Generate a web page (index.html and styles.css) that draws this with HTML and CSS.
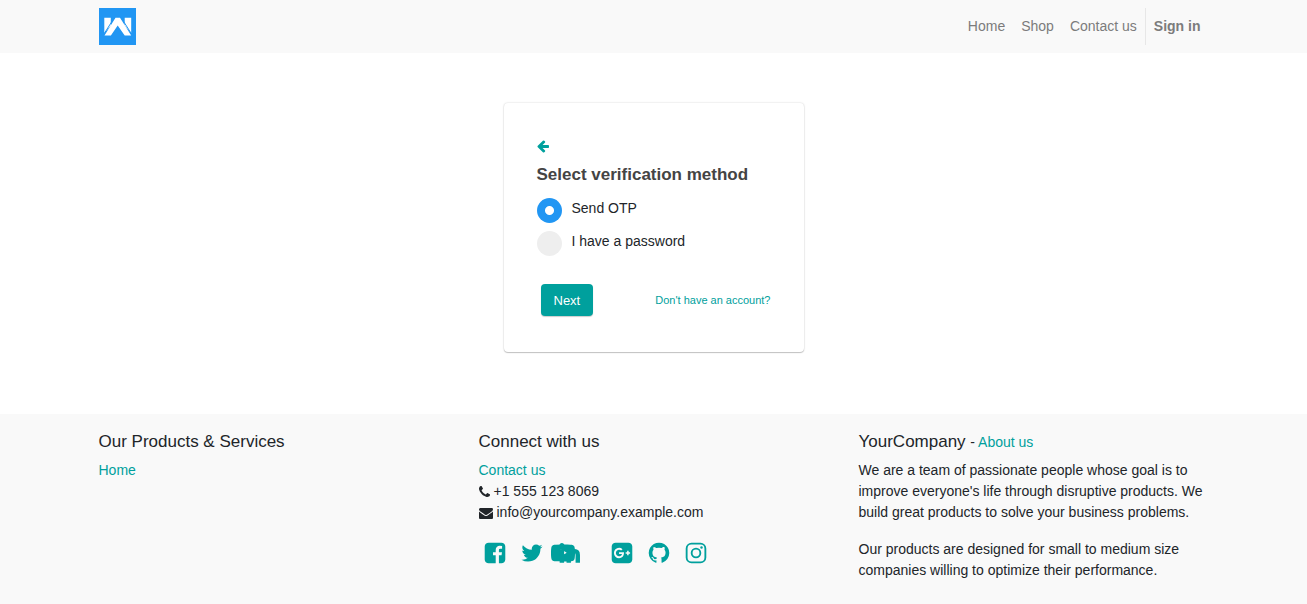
FILE: index.html
```
<!DOCTYPE html>
<html lang="en">
<head>
<meta charset="utf-8">
<meta name="viewport" content="width=device-width, initial-scale=1">
<title>Sign in</title>
<link rel="stylesheet" href="styles.css">
</head>
<body>
<header class="header">
  <div class="container navbar">
    <a class="logo" href="#" aria-label="Home page">
      <svg viewBox="0 0 37 37"><rect width="37" height="37" fill="#2196f3"/><g fill="#fff"><path d="M5.300 9.700h6.500v7.800L5.300 25z"/><path d="M32.200 9.700h-6.500v7.800l6.500 7.500z"/><path d="M5.500 27.500L16.500 9.700h4.500L32.200 27.500h-6.500L18.700 17.500l-6.800 10z"/></g><path d="M4.800 26.200L15.300 9.700M32.700 26.200L22.200 9.700" stroke="#2196f3" stroke-width="1"/></svg>
    </a>
    <nav class="menu">
      <a href="#">Home</a>
      <a href="#">Shop</a>
      <a href="#">Contact us</a>
      <a class="sign-in" href="#">Sign in</a>
    </nav>
  </div>
</header>

<main class="main">
  <form class="card">
    <a class="back" href="#" aria-label="Back">
      <svg class="icon-small" viewBox="128 0 1792 1792"><path d="M1664 896v128q0 53-32.500 90.500t-84.500 37.500h-704l293 294q38 36 38 90t-38 90l-75 76q-37 37-90 37-52 0-91-37l-651-652q-37-37-37-90 0-52 37-91l651-650q38-38 91-38 52 0 90 38l75 74q38 38 38 91t-38 91l-293 293h704q52 0 84.500 37.500t32.500 90.500z"/></svg>
    </a>
    <h1 class="card-title">Select verification method</h1>
    <label class="option"><input type="radio" name="method" checked><span>Send OTP</span></label>
    <label class="option"><input type="radio" name="method"><span>I have a password</span></label>
    <div class="actions">
      <button class="next" type="button">Next</button>
      <a class="signup" href="#">Don't have an account?</a>
    </div>
  </form>
</main>

<footer class="footer">
  <div class="container columns">
    <section>
      <h2>Our Products &amp; Services</h2>
      <ul class="list"><li><a href="#">Home</a></li></ul>
    </section>
    <section>
      <h2>Connect with us</h2>
      <ul class="list">
        <li><a href="#">Contact us</a></li>
        <li class="contact"><svg class="icon-phone" viewBox="192 0 1408 1792"><path d="M1600 1240q0 27-10 70.500t-21 68.500q-21 50-122 106-94 51-186 51-27 0-53-3.500t-57.500-12.500-47-14.500-55.500-20.500-49-18q-98-35-175-83-127-79-264-216t-216-264q-48-77-83-175-3-9-18-49t-20.500-55.500-14.500-47-12.500-57.500-3.500-53q0-92 51-186 56-101 106-122 25-11 68.500-21t70.500-10q14 0 21 3 18 6 53 76 11 19 30 54t35 63.500 31 53.500q3 4 17.500 25t21.500 35.500 7 28.500q0 20-28.500 50t-62 55-62 53-28.500 46q0 9 5 22.500t8.500 20.500 14 24 11.500 19q76 137 174 235t235 174q2 1 19 11.500t24 14 20.500 8.500 22.500 5q18 0 46-28.500t53-62 55-62 50-28.500q14 0 28.500 7t35.500 21.500 25 17.500q25 15 53.500 31t63.500 35 54 30q70 35 76 53 3 7 3 21z"/></svg><span>+1 555 123 8069</span></li>
        <li class="contact"><svg class="icon-small" viewBox="0 0 1792 1792"><path d="M1792 710v794q0 66-47 113t-113 47h-1472q-66 0-113-47t-47-113v-794q44 49 101 87 362 246 497 345 57 42 92.500 65.500t94.500 48 110 24.500h2q51 0 110-24.500t94.500-48 92.500-65.500q170-123 498-345 57-39 100-87zm0-294q0 79-49 151t-122 123q-376 261-468 325-10 7-42.500 31t-54 38.500-52 32.500-57.500 27-50 9h-2q-23 0-50-9t-57.500-27-52-32.500-54-38.500-42.500-31q-91-64-262-182.500t-205-142.500q-62-42-117-115.500t-55-136.500q0-78 41.500-130t118.500-52h1472q65 0 112.500 47t47.500 113z"/></svg><span>info@yourcompany.example.com</span></li>
      </ul>
      <div class="social">
        <a href="#" aria-label="Facebook"><svg viewBox="0 0 1792 1792"><path d="M1376 128q119 0 203.500 84.500t84.500 203.500v960q0 119-84.500 203.500t-203.500 84.500h-188v-595h199l30-232h-229v-148q0-56 23.500-84t91.500-28l122-1v-207q-63-9-178-9-136 0-217.500 80t-81.500 226v171h-200v232h200v595h-532q-119 0-203.500-84.500t-84.500-203.500v-960q0-119 84.500-203.500t203.500-84.500h960z"/></svg></a>
        <a href="#" aria-label="Twitter"><svg viewBox="0 0 1792 1792"><path d="M1684 408q-67 98-162 167 1 14 1 42 0 130-38 259.500t-115.500 248.500-184.500 210.500-258 146-323 54.500q-271 0-496-145 35 4 78 4 225 0 401-138-105-2-188-64.500t-114-159.500q33 5 61 5 43 0 85-11-112-23-185.500-111.500t-73.500-205.500v-4q68 38 146 41-66-44-105-115t-39-154q0-88 44-163 121 149 294.500 238.500t371.500 99.500q-8-38-8-74 0-134 94.500-228.500t228.500-94.500q140 0 236 102 109-21 205-78-37 115-142 178 93-10 186-50z"/></svg></a>
        <a class="media" href="#" aria-label="YouTube and LinkedIn"><svg viewBox="0 0 2240 1792"><path d="M711 1128l484-250-484-253v503zm185-862q168 0 324.500 4.500t229.500 9.500l73 4q1 0 17 1.500t23 3 23.500 4.500 28.500 8 28 13 31 19.500 29 26.500q6 6 15.500 18.500t29 58.500 26.500 101q8 64 12.500 136.500t5.500 113.500v176q1 145-18 290-7 55-25 99.500t-32 61.500l-14 17q-14 15-29 26.500t-31 19-28 12.500-28.500 8-24 4.500-23 3-16.500 1.500q-251 19-627 19-207-2-359.500-6.500t-200.500-7.500l-49-4-36-4q-36-5-54.500-10t-51-21-56.500-41q-6-6-15.500-18.500t-29-58.500-26.500-101q-8-64-12.500-136.500t-5.500-113.500v-176q-1-145 18-290 7-55 25-99.500t32-61.500l14-17q14-15 29-26.500t31-19.500 28-13 28.500-8 23.500-4.500 23-3 17-1.500q251-18 627-18z"/><path transform="translate(500 0)" d="M477 625v991h-330v-991h330zm21-306q1 73-50.500 122t-135.500 49h-2q-82 0-132-49t-50-122q0-74 51.500-122.500t134.500-48.500 133 48.500 51 122.500zm1166 729v568h-329v-530q0-105-40.500-164.500t-126.500-59.500q-63 0-105.500 34.500t-63.500 85.500q-11 30-11 81v553h-329q2-399 2-647t-1-296l-1-48h329v144h-2q20-32 41-56t56.500-52 87-43.500 114.500-15.500q171 0 275 113.500t104 332.500z"/></svg></a>
        <a href="#" aria-label="Google Plus"><svg viewBox="0 0 1792 1792"><path d="M1045 905q0-26-6-64h-362v132h217q-3 24-16.500 50t-37.500 53-66.500 44.500-96.500 17.500q-99 0-169-71t-70-171 70-171 169-71q92 0 153 59l104-101q-108-100-257-100-160 0-272 112.500t-112 271.500 112 271.500 272 112.500q165 0 266.500-105t101.500-270zm345 46h109v-110h-109v-110h-110v110h-110v110h110v110h110v-110zm274-535v960q0 119-84.500 203.500t-203.500 84.500h-960q-119 0-203.500-84.500t-84.500-203.500v-960q0-119 84.500-203.500t203.500-84.500h960q119 0 203.500 84.500t84.500 203.500z"/></svg></a>
        <a href="#" aria-label="GitHub"><svg viewBox="0 0 1792 1792"><path d="M896 128q209 0 385.500 103t279.500 279.500 103 385.500q0 251-146.500 451.500t-378.500 277.500q-27 5-40-7t-13-30q0-3 .5-76.500t.5-134.500q0-97-52-142 57-6 102.500-18t94-39 81-66.500 53-105 20.500-150.500q0-119-79-206 37-91-8-204-28-9-81 11t-92 44l-38 24q-93-26-192-26t-192 26q-16-11-42.500-27t-83.500-38.500-85-13.500q-45 113-8 204-79 87-79 206 0 85 20.500 150t52.500 105 80.500 67 94 39 102.500 18q-39 36-49 103-21 10-45 15t-57 5-65.500-21.500-55.500-62.500q-19-32-48.500-52t-49.500-24l-20-3q-21 0-29 4.500t-5 11.500 9 14 13 12l7 5q22 10 43.500 38t31.500 51l10 23q13 38 44 61.500t67 30 69.500 7 55.500-3.500l23-4q0 38 .5 88.500t.5 54.500q0 18-13 30t-40 7q-232-77-378.500-277.500t-146.500-451.500q0-209 103-385.500t279.500-279.500 385.500-103z"/></svg></a>
        <a href="#" aria-label="Instagram"><svg viewBox="0 0 1792 1792"><g fill="none" stroke="currentColor" stroke-width="138"><rect x="197" y="197" width="1398" height="1398" rx="360"/><circle cx="896" cy="896" r="325"/></g><circle cx="1306" cy="486" r="92"/></svg></a>
      </div>
    </section>
    <section>
      <h2>YourCompany <small>- <a href="#">About us</a></small></h2>
      <p>We are a team of passionate people whose goal is to improve everyone's life through disruptive products. We build great products to solve your business problems.</p>
      <p>Our products are designed for small to medium size companies willing to optimize their performance.</p>
    </section>
  </div>
</footer>
</body>
</html>
```
FILE: styles.css
```
* {
  box-sizing: border-box;
}

body {
  margin: 0;
  min-height: 100vh;
  display: flex;
  flex-direction: column;
  font: 14px/21px "Liberation Sans", Arial, sans-serif;
  color: #212529;
  background: #fff;
}

a {
  color: #00a09d;
  text-decoration: none;
}

svg {
  display: block;
  fill: currentColor;
}

.container {
  width: 100%;
  max-width: 1140px;
  margin: 0 auto;
  padding: 0 15px;
}

.header,
.footer {
  background: #f9f9f9;
}

.navbar {
  display: flex;
  justify-content: space-between;
  padding-top: 8px;
  padding-bottom: 8px;
}

.logo svg {
  width: 37px;
  height: 37px;
}

.menu {
  display: flex;
}

.menu a {
  padding: 8px;
  color: #7c7c7c;
}

.menu .sign-in {
  border-left: 1px solid #e7e7e7;
  font-weight: bold;
}

.main {
  flex: 1;
  padding: 50px 16px 61px;
}

.card {
  width: 100%;
  max-width: 300px;
  margin: 0 auto;
  padding: 32px 33px 36px;
  border-radius: 4px;
  box-shadow: 0 0 2px rgba(0, 0, 0, 0.2), 0 1px 1px rgba(0, 0, 0, 0.2);
}

.back {
  display: inline-block;
  padding: 4px 0;
}

.icon-small {
  width: 14px;
  height: 14px;
}

.icon-phone {
  width: 11px;
  height: 14px;
}

.card-title {
  margin: 1px 0 13px;
  font-size: 17px;
  line-height: 21px;
  color: #444;
}

.option {
  display: flex;
  gap: 10px;
  margin-bottom: 8px;
  cursor: pointer;
}

.option input {
  appearance: none;
  width: 25px;
  height: 25px;
  margin: 0;
  border-radius: 50%;
  background: #eee;
}

.option input:checked {
  background: radial-gradient(circle, #fff 4px, #2196f3 5px);
}

.actions {
  display: flex;
  justify-content: space-between;
  align-items: center;
  margin-top: 28px;
  padding-left: 4px;
}

.next {
  height: 32px;
  padding: 0 13px;
  border: 0;
  border-radius: 4px;
  background: #00a09d;
  color: #fff;
  font: 13px "Liberation Sans", Arial, sans-serif;
  box-shadow: 0 1px 1px rgba(0, 0, 0, 0.2);
}

.signup {
  font-size: 11px;
}

.footer {
  padding: 17px 0 7px;
}

.columns {
  display: grid;
  grid-template-columns: repeat(3, 1fr);
  gap: 30px;
}

h2 {
  margin: 0 0 8px;
  font-size: 17px;
  line-height: 21px;
  font-weight: normal;
}

h2 small {
  font-size: 14px;
  line-height: 1;
}

p {
  margin: 0 0 16px;
}

.list {
  margin: 0;
  padding: 0;
  list-style: none;
}

.contact {
  display: flex;
  align-items: center;
  gap: 4px;
}

.social {
  display: flex;
  gap: 13px;
  padding: 18px 4px 0;
}

.social svg {
  width: 24px;
  height: 24px;
}

.social .media {
  margin: 0 16px 0 -6px;
}

.social .media svg {
  width: 30px;
}
```
